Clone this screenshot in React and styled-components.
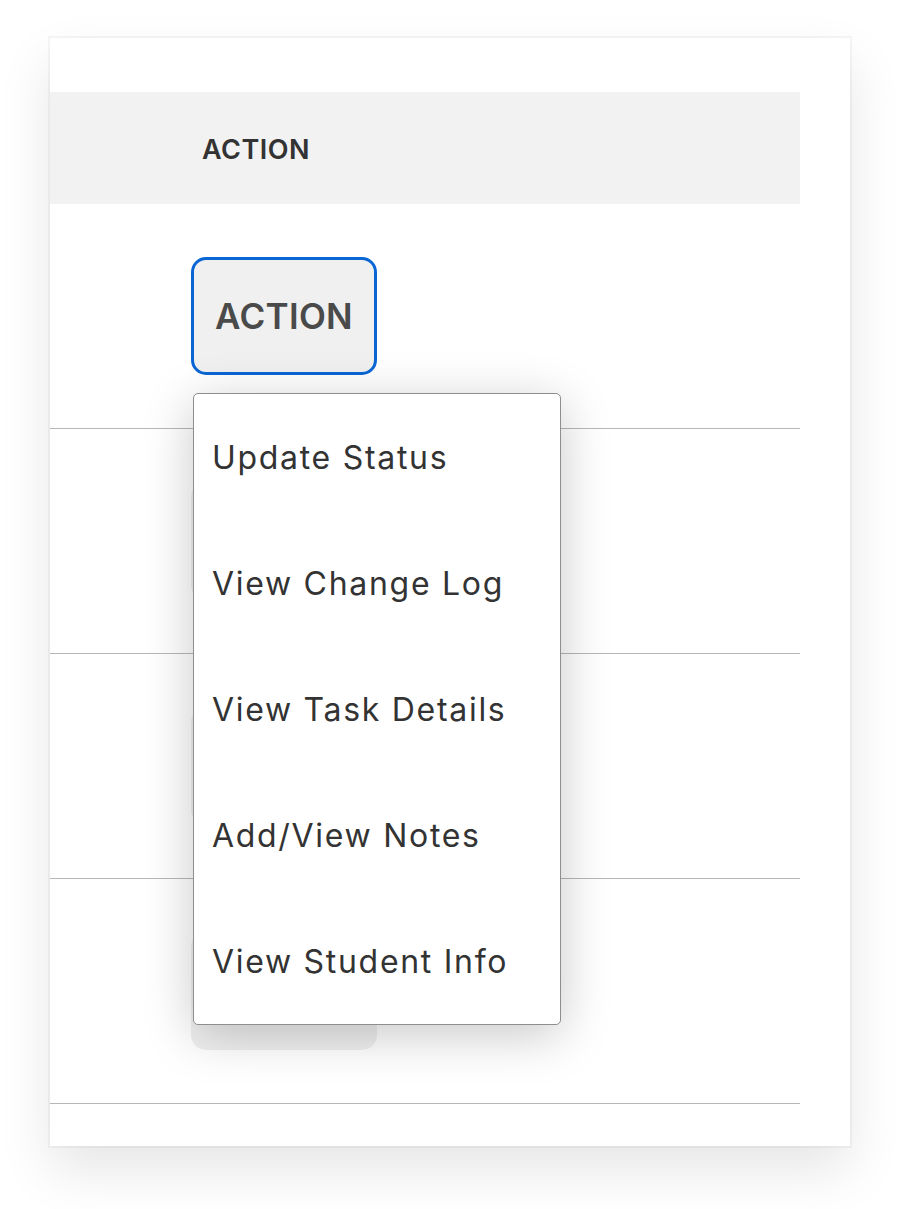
import React from 'react';
import styled, { createGlobalStyle } from 'styled-components';

const GlobalStyle = createGlobalStyle`
  html, body {
    margin: 0;
    padding: 0;
    background: #ffffff;
    font-family: Inter, "Liberation Sans", Arial, sans-serif;
  }
`

const Page = styled.div`
  padding: 38px 0 0 50px;
  height: 1209px;
  box-sizing: border-box;
  overflow: hidden;
`

const Window = styled.div`
  width: 800px;
  height: 1108px;
  box-sizing: border-box;
  padding: 54px 50px 0 0;
  background: #ffffff;
  box-shadow: 0 0 0 2px rgba(0, 0, 0, 0.035), 0 24px 50px rgba(0, 0, 0, 0.1);
`

const HeaderRow = styled.div`
  display: flex;
  align-items: center;
  height: 112px;
  background: #f2f2f2;
`

const Spacer = styled.div`
  width: 141px;
  flex-shrink: 0;
`

const HeaderCell = styled.div`
  padding-left: 11px;
  padding-top: 2px;
  font-size: 27px;
  font-weight: 600;
  letter-spacing: 0.5px;
  color: #333333;
`

const Row = styled.div`
  display: flex;
  align-items: center;
  height: 224px;
  border-bottom: 1px solid #b6b6bb;
`

const Cell = styled.div`
  position: relative;
`

const ActionButton = styled.button`
  display: block;
  width: 186px;
  height: 118px;
  box-sizing: border-box;
  margin: 0;
  padding: 0;
  border-radius: 15px;
  border: 3px solid ${p => (p.$focused ? '#0a66d4' : 'transparent')};
  background: #f0f0f0;
  font-family: Inter, "Liberation Sans", Arial, sans-serif;
  font-size: 35px;
  font-weight: 600;
  letter-spacing: 0.3px;
  color: #4a4a4a;
  cursor: pointer;
  outline: none;
`

const Menu = styled.div`
  position: absolute;
  top: calc(100% + 18px);
  left: 2px;
  width: 368px;
  box-sizing: border-box;
  background: #ffffff;
  border: 1px solid #8e8e8e;
  border-radius: 5px;
  box-shadow: 0 10px 50px rgba(0, 0, 0, 0.22);
  z-index: 10;
`

const MenuItem = styled.div`
  display: flex;
  align-items: center;
  height: 126px;
  padding-left: 18px;
  font-size: 32px;
  letter-spacing: 1.7px;
  color: #333333;
  white-space: nowrap;
`

const menuItems = [
  'Update Status',
  'View Change Log',
  'View Task Details',
  'Add/View Notes',
  'View Student Info',
]

export default function App() {
  return (
    <>
      <GlobalStyle />
      <Page>
        <Window>
          <HeaderRow>
            <Spacer />
            <HeaderCell>ACTION</HeaderCell>
          </HeaderRow>
          {[0, 1, 2, 3].map(i => (
            <Row key={i}>
              <Spacer />
              <Cell>
                {/* rows below the open menu are covered, so their label is left out */}
                <ActionButton $focused={i === 0}>{i === 0 ? 'ACTION' : ''}</ActionButton>
                {i === 0 && (
                  <Menu>
                    {menuItems.map(label => (
                      <MenuItem key={label}>{label}</MenuItem>
                    ))}
                  </Menu>
                )}
              </Cell>
            </Row>
          ))}
        </Window>
      </Page>
    </>
  );
}
